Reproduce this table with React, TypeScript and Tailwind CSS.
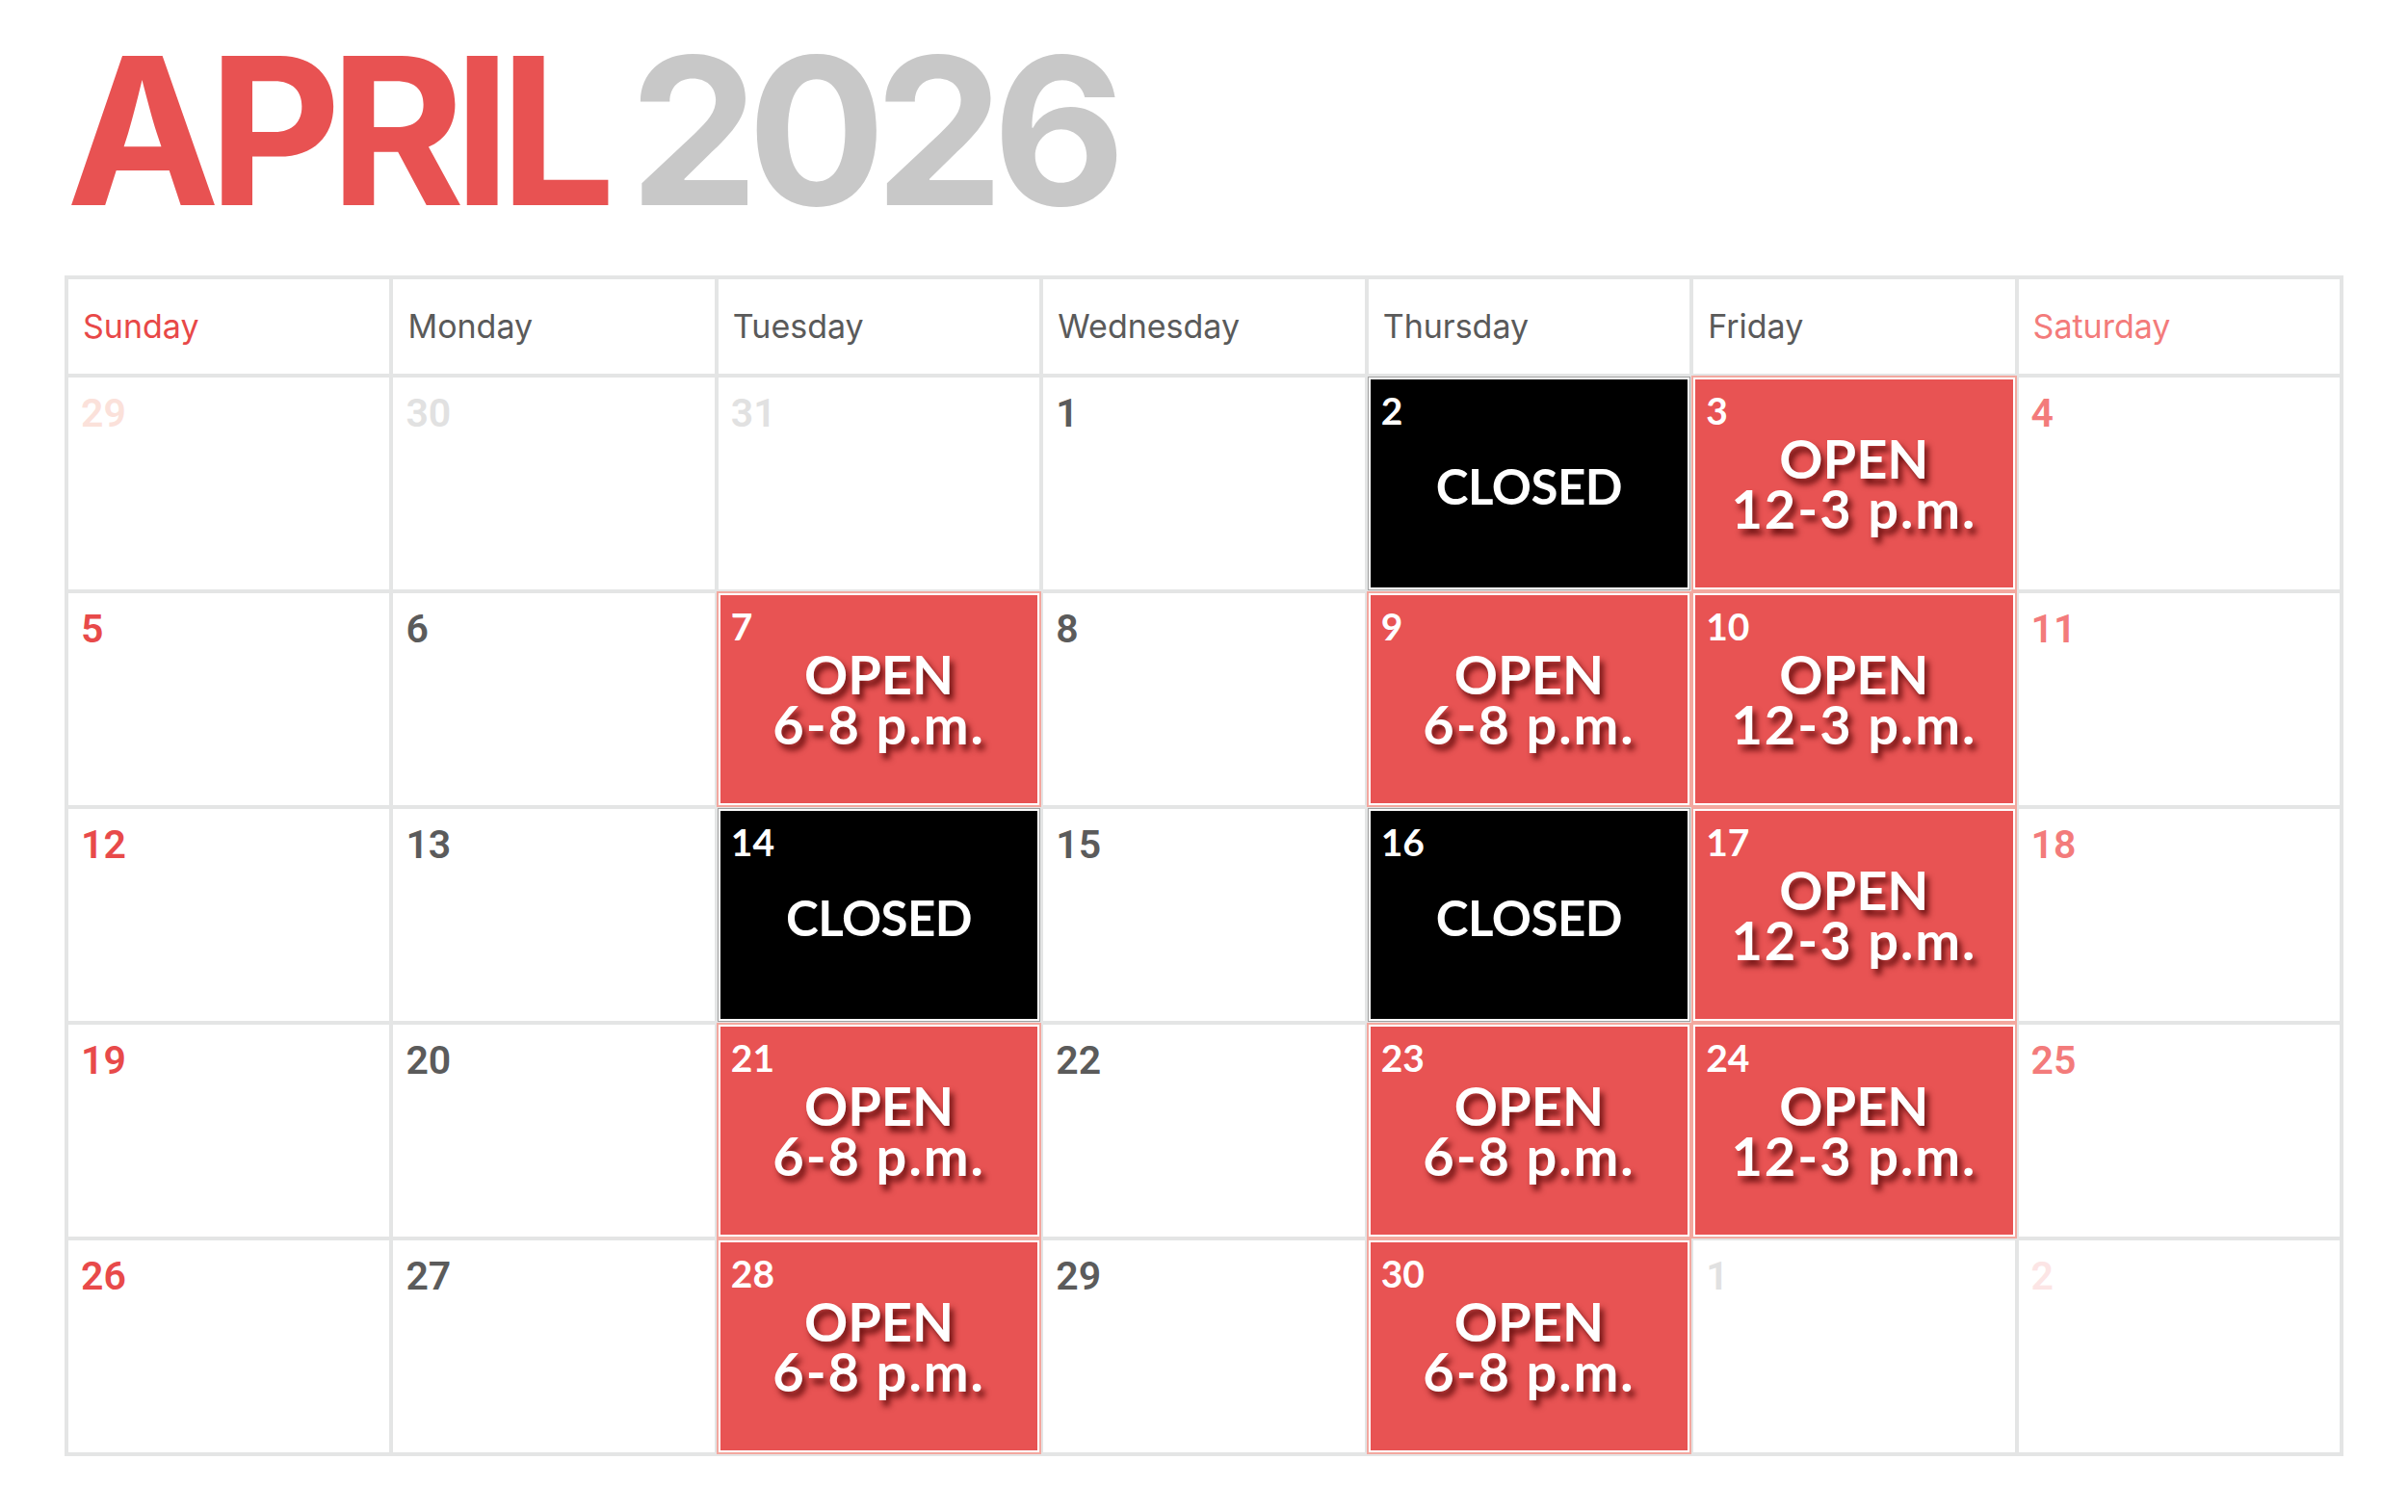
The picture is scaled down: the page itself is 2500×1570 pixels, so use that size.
import React from "react";

type Cell = {
  n: number;
  out?: boolean;
  ev?: "closed" | "open";
  time?: string;
};

const rows: Cell[][] = [
  [
    { n: 29, out: true },
    { n: 30, out: true },
    { n: 31, out: true },
    { n: 1 },
    { n: 2, ev: "closed" },
    { n: 3, ev: "open", time: "12-3 p.m." },
    { n: 4 },
  ],
  [
    { n: 5 },
    { n: 6 },
    { n: 7, ev: "open", time: "6-8 p.m." },
    { n: 8 },
    { n: 9, ev: "open", time: "6-8 p.m." },
    { n: 10, ev: "open", time: "12-3 p.m." },
    { n: 11 },
  ],
  [
    { n: 12 },
    { n: 13 },
    { n: 14, ev: "closed" },
    { n: 15 },
    { n: 16, ev: "closed" },
    { n: 17, ev: "open", time: "12-3 p.m." },
    { n: 18 },
  ],
  [
    { n: 19 },
    { n: 20 },
    { n: 21, ev: "open", time: "6-8 p.m." },
    { n: 22 },
    { n: 23, ev: "open", time: "6-8 p.m." },
    { n: 24, ev: "open", time: "12-3 p.m." },
    { n: 25 },
  ],
  [
    { n: 26 },
    { n: 27 },
    { n: 28, ev: "open", time: "6-8 p.m." },
    { n: 29 },
    { n: 30, ev: "open", time: "6-8 p.m." },
    { n: 1, out: true },
    { n: 2, out: true },
  ],
];

const days = ["Sunday", "Monday", "Tuesday", "Wednesday", "Thursday", "Friday", "Saturday"];

function numColor(col: number, out?: boolean) {
  if (col === 0) return out ? "text-[#fbe1da]" : "text-[#e84a4a]";
  if (col === 6) return out ? "text-[#fce5e5]" : "text-[#f37b7b]";
  return out ? "text-[#e1e1e1]" : "text-[#5b5b5b]";
}

function headColor(col: number) {
  if (col === 0) return "text-[#e84848]";
  if (col === 6) return "text-[#f37b7b]";
  return "text-[#5a5a5a]";
}

function DayCell({ c, col }: { c: Cell; col: number }) {
  if (c.ev === "open") {
    return (
      <div className="bg-white p-[2px] shadow-[0_0_0_2px_#f3a89f]">
        <div className="grid h-full bg-[#e85353] text-white font-[Lato]">
          <div className="[grid-area:1/1] self-start justify-self-start pl-[11px] pt-[13px] text-[39px] font-bold leading-none">
            {c.n}
          </div>
          <div className="[grid-area:1/1] self-center justify-self-center text-center text-[56px] font-bold leading-[52px] [text-shadow:4px_6px_6px_rgba(85,5,5,0.85)]">
            <div>OPEN</div>
            <div className="tracking-[0.035em]">{c.time}</div>
          </div>
        </div>
      </div>
    );
  }
  if (c.ev === "closed") {
    return (
      <div className="bg-white p-[2px] shadow-[0_0_0_1px_#a0a0a0]">
        <div className="grid h-full bg-black text-white font-[Lato]">
          <div className="[grid-area:1/1] self-start justify-self-start pl-[11px] pt-[13px] text-[39px] font-bold leading-none">
            {c.n}
          </div>
          <div className="[grid-area:1/1] self-center justify-self-center pt-[4px] text-[51px] font-bold leading-none tracking-[-0.01em]">
            CLOSED
          </div>
        </div>
      </div>
    );
  }
  return (
    <div className="bg-white pl-[13px] pt-[17px]">
      <div className={`font-[Roboto] text-[41px] font-semibold leading-none ${numColor(col, c.out)}`}>{c.n}</div>
    </div>
  );
}

export default function App() {
  return (
    <div className="min-h-[1570px] w-[2500px] bg-white px-[67px] pt-[29px]">
      <div className="flex items-start gap-[26px] pl-[2px] font-[Inter] text-[213px] font-bold leading-none tracking-[-0.055em]">
        <span className="text-[#e85252]">APRIL</span>
        <span className="text-[#c8c8c8]">2026</span>
      </div>
      <div className="mt-[44px] w-[2366px] bg-[#e4e5e5] p-[4px]">
        <div className="grid grid-cols-7 grid-rows-[98px_repeat(5,220px)] gap-[4px]">
          {days.map((d, i) => (
            <div key={d} className="flex items-center bg-white pl-[15px]">
              <span className={`font-[Inter] text-[34px] leading-none ${headColor(i)}`}>{d}</span>
            </div>
          ))}
          {rows.map((r, ri) =>
            r.map((c, ci) => <DayCell key={`${ri}-${ci}`} c={c} col={ci} />)
          )}
        </div>
      </div>
    </div>
  );
}
